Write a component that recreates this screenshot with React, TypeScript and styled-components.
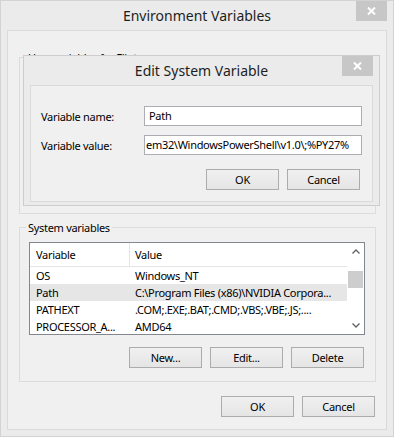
import React from 'react';
import styled, { createGlobalStyle } from 'styled-components';

const GlobalStyle = createGlobalStyle`
html, body { margin: 0; padding: 0; background: #ebebeb; }
body { font-family: "Noto Sans", "Liberation Sans", sans-serif; font-size: 11px; letter-spacing: -0.3px; color: #000; }
* { box-sizing: border-box; }
`;

const Window = styled.div`
width: 394px;
height: 437px;
border: 1px solid #d3d3d3;
background: #ebebeb;
padding: 0 6px 6px;
display: flex;
flex-direction: column;
`;
const TitleBar = styled.div`
display: grid;
grid-template-columns: 31px 1fr 31px;
height: 29px;
flex-shrink: 0;
`;
const Title = styled.div`
grid-column: 2;
text-align: center;
line-height: 29px;
font-size: 14px;
letter-spacing: 0;
color: #1e1e1e;
white-space: nowrap;
`;
const CloseButton = styled.div`
grid-column: 3;
align-self: start;
width: 31px;
height: 20px;
background: #c7c7c7;
display: flex;
align-items: center;
justify-content: center;
`;
const Client = styled.div`
position: relative;
height: 400px;
border: 1px solid #dadada;
background: #f0f0f0;
padding: 19px 10px 12px 11px;
display: flex;
flex-direction: column;
`;
const Group = styled.fieldset<{ $height?: number; $top?: number }>`
margin: ${p => p.$top || 0}px 0 0 0;
padding: 7px 10px 13px 9px;
border: 1px solid #dcdcdc;
min-width: 0;
height: ${p => (p.$height ? p.$height + 'px' : 'auto')};
`;
const Caption = styled.legend`
padding: 0 2px;
margin-left: -3px;
line-height: 15px;
`;
const ListView = styled.div`
height: 93px;
border: 1px solid #828790;
background: #fff;
display: grid;
grid-template-columns: 1fr 17px;
overflow: hidden;
`;
const ListBody = styled.div`
display: flex;
flex-direction: column;
overflow: hidden;
`;
const HeaderRow = styled.div`
display: grid;
grid-template-columns: 100px 1fr;
height: 24px;
flex-shrink: 0;
border-bottom: 1px solid #e5e5e5;
`;
const HeaderCell = styled.div<{ $first?: boolean }>`
display: flex;
align-items: center;
padding-left: ${p => (p.$first ? 6 : 5)}px;
border-right: ${p => (p.$first ? '1px solid #e5e5e5' : 'none')};
`;
const Row = styled.div<{ $selected?: boolean }>`
display: grid;
grid-template-columns: 100px 1fr;
height: 17px;
flex-shrink: 0;
background: ${p => (p.$selected ? '#e6e6e6' : 'transparent')};
`;
const Cell = styled.div<{ $first?: boolean }>`
padding-left: ${p => (p.$first ? 6 : 5)}px;
line-height: 17px;
white-space: nowrap;
overflow: hidden;
`;
const ScrollBar = styled.div`
display: flex;
flex-direction: column;
align-items: center;
background: #fff;
`;
const Arrow = styled.div`
height: 17px;
width: 17px;
display: flex;
align-items: center;
justify-content: center;
flex-shrink: 0;
`;
const Thumb = styled.div`
width: 15px;
height: 17px;
margin-top: 11px;
background: #cdcdcd;
`;
const Track = styled.div`
flex: 1;
`;
const ButtonRow = styled.div<{ $top: number; $right: number }>`
display: flex;
justify-content: flex-end;
gap: 8px;
margin-top: ${p => p.$top}px;
margin-right: ${p => p.$right}px;
`;
const Button = styled.button`
width: 73px;
height: 21px;
padding: 0;
border: 1px solid #acacac;
border-radius: 0;
background: linear-gradient(#f0f0f0, #e5e5e5);
font-family: inherit;
font-size: 11px;
letter-spacing: inherit;
color: #000;
`;
const Dialog = styled.div`
position: absolute;
left: 15px;
top: 24px;
width: 357px;
height: 151px;
border: 1px solid #cdcdcd;
background: #ebebeb;
padding: 0 6px 3px;
display: flex;
flex-direction: column;
`;
const Panel = styled.div`
flex: 1;
border: 1px solid #dadada;
background: #f0f0f0;
padding: 20px 10px 11px 10px;
`;
const FormGrid = styled.div`
display: grid;
grid-template-columns: 103px 218px;
row-gap: 9px;
align-items: center;
`;
const TextBox = styled.div<{ $pad: number }>`
height: 20px;
border: 1px solid #abadb3;
background: #fff;
padding-left: ${p => p.$pad}px;
line-height: 18px;
white-space: nowrap;
overflow: hidden;
`;

const CloseGlyph = () => (
  <svg width="9" height="8" viewBox="0 0 9 8">
    <path d="M1 0.5 L8 7.5 M8 0.5 L1 7.5" stroke="#fff" strokeWidth="2" fill="none" />
  </svg>
);

const Chevron = ({ up }: { up?: boolean }) => (
  <svg width="8" height="5" viewBox="0 0 8 5">
    <path d={up ? 'M0.5 4.5 L4 1 L7.5 4.5' : 'M0.5 0.5 L4 4 L7.5 0.5'} stroke="#606060" strokeWidth="1.3" fill="none" />
  </svg>
);

const systemVars = [
  { name: 'OS', value: 'Windows_NT' },
  { name: 'Path', value: 'C:\\Program Files (x86)\\NVIDIA Corpora...', selected: true },
  { name: 'PATHEXT', value: '.COM;.EXE;.BAT;.CMD;.VBS;.VBE;.JS;....' },
  { name: 'PROCESSOR_A...', value: 'AMD64' },
];

const App = () => {
  return (
    <Window>
      <GlobalStyle />
      <TitleBar>
        <Title>Environment Variables</Title>
        <CloseButton><CloseGlyph /></CloseButton>
      </TitleBar>
      <Client>
        <Group $height={164}>
          <Caption>User variables for Flint</Caption>
        </Group>
        <Group $top={6}>
          <Caption>System variables</Caption>
          <ListView>
            <ListBody>
              <HeaderRow>
                <HeaderCell $first>Variable</HeaderCell>
                <HeaderCell>Value</HeaderCell>
              </HeaderRow>
              {systemVars.map(v => (
                <Row key={v.name} $selected={v.selected}>
                  <Cell $first>{v.name}</Cell>
                  <Cell>{v.value}</Cell>
                </Row>
              ))}
            </ListBody>
            <ScrollBar>
              <Arrow><Chevron up /></Arrow>
              <Thumb />
              <Track />
              <Arrow><Chevron /></Arrow>
            </ScrollBar>
          </ListView>
          <ButtonRow $top={12} $right={1}>
            <Button>New...</Button>
            <Button>Edit...</Button>
            <Button>Delete</Button>
          </ButtonRow>
        </Group>
        <ButtonRow $top={14} $right={1}>
          <Button>OK</Button>
          <Button>Cancel</Button>
        </ButtonRow>

        <Dialog>
          <TitleBar>
            <Title>Edit System Variable</Title>
            <CloseButton><CloseGlyph /></CloseButton>
          </TitleBar>
          <Panel>
            <FormGrid>
              <span>Variable name:</span>
              <TextBox $pad={4}>Path</TextBox>
              <span>Variable value:</span>
              <TextBox $pad={1}>em32\WindowsPowerShell\v1.0\;%PY27%</TextBox>
            </FormGrid>
            <ButtonRow $top={14} $right={2}>
              <Button>OK</Button>
              <Button>Cancel</Button>
            </ButtonRow>
          </Panel>
        </Dialog>
      </Client>
    </Window>
  );
};

export default App;
